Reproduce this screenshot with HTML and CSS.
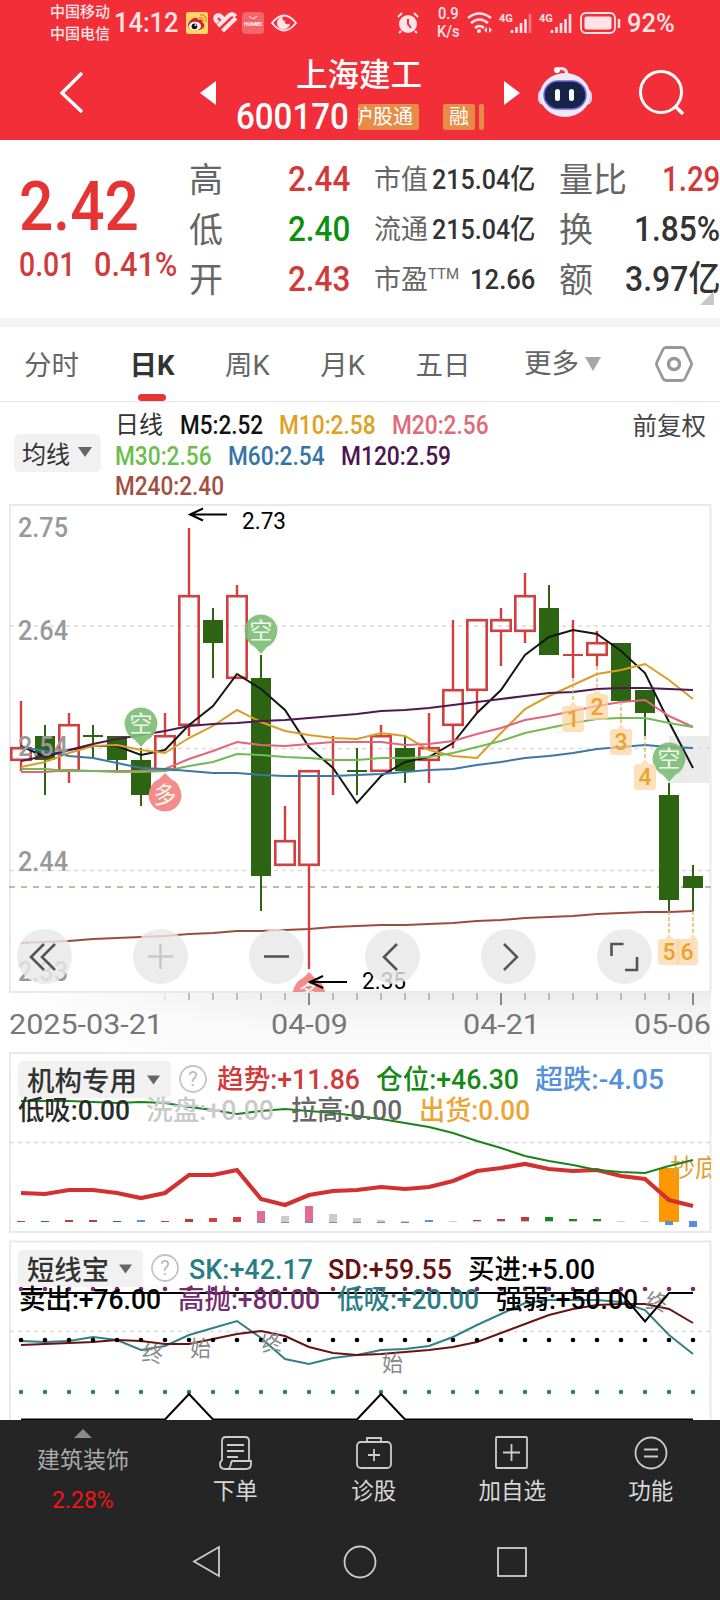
FILE: index.html
```html
<!DOCTYPE html>
<html lang="zh-CN">
<head>
    <meta charset="UTF-8">
    <meta name="viewport" content="width=device-width, initial-scale=1.0">
    <title>上海建工 600170</title>
    <link rel="stylesheet" href="styles.css">
</head>
<body>
    <header class="header">
        <div class="status-bar">
            <div class="carriers"><span>中国移动</span><span>中国电信</span></div>
            <span class="clock" data-w="65">14:12</span>
            <svg class="status-apps" width="112" height="24" viewBox="0 0 112 24">
                <rect x="1" y="1" width="22" height="22" rx="2" fill="#ffd667"/>
                <path d="M3 14c1-5 6-8 9-7 1 .3 1 1 1 2 3-1 5 0 4 2 2 1 3 3 2 5-2 4-15 5-16-2z" fill="#d5232b"/>
                <ellipse cx="10" cy="15" rx="6" ry="4.3" fill="#fff"/>
                <circle cx="9.5" cy="15.3" r="2.9" fill="#111"/><circle cx="10.5" cy="14.3" r="1" fill="#fff"/>
                <path d="M14 7c3-1 5 1 4 4M15 4c5-1 7 3 6 7" fill="none" stroke="#e8912b" stroke-width="1.4"/>
                <g fill="none" stroke="#ffe3e5" stroke-width="4.200"><path d="M38 7.500l-2-2a3 3 0 0 0-5 4l2 2M33 15l11-10.500q4-3 6.500 1M37.500 20l13.500-13"/></g>
                <rect x="57" y="1" width="22" height="22" rx="4" fill="#f4666c"/>
                <path d="M64 5q4 5 8 0" fill="none" stroke="#ffd9da" stroke-width="1.200"/>
                <text x="59" y="15" textLength="18" lengthAdjust="spacingAndGlyphs" class="tiny-logo">HUAWEI</text>
                <path d="M87 12q12-15 24 0q-12 15-24 0z" fill="none" stroke="#ffe3e5" stroke-width="2"/>
                <path d="M98 5.500a6.500 6.500 0 1 0 7 7c-3 2-6 0-5-3-3 0-3-2-2-4z" fill="#ffe3e5"/>
            </svg>
            <div class="status-right">
                <svg width="24" height="24" viewBox="0 0 24 24"><circle cx="12" cy="13" r="9" fill="#ffe3e5"/><path d="M2 6l4-4M22 6l-4-4M5 20l-2 2M19 20l2 2" stroke="#ffe3e5" stroke-width="2"/><path d="M12 8v5l3 4" fill="none" stroke="#f22f38" stroke-width="2"/></svg>
                <div class="net-speed"><span data-w="21">0.9</span><span data-w="23">K/s</span></div>
                <svg width="26" height="24" viewBox="0 0 26 24"><path d="M1 7q11-9 23 0M4 12q8.500-7 17 0M8 17q4.500-4 9 0" fill="none" stroke="#ffe3e5" stroke-width="2.600"/><circle cx="12" cy="20" r="2" fill="#ffe3e5"/><path d="M17 19l3-3v6zM25 19l-3-3v6z" fill="#ffe3e5"/></svg>
                <svg class="signal" width="34" height="24" viewBox="0 0 34 24"><text x="0" y="11" class="tiny-4g">4G</text><path d="M13 22v-3M17.500 22v-6M22 22v-10M26.500 22v-14" stroke="#ffe3e5" stroke-width="2.600"/><path d="M31 22v-19" stroke="#f77a80" stroke-width="2.600"/></svg>
                <svg class="signal" width="34" height="24" viewBox="0 0 34 24"><text x="0" y="11" class="tiny-4g">4G</text><path d="M13 22v-3M17.500 22v-6M22 22v-10M26.500 22v-14M31 22v-19" stroke="#ffe3e5" stroke-width="2.600"/></svg>
                <svg class="battery" width="42" height="24" viewBox="0 0 42 24"><rect x="1" y="2" width="34" height="20" rx="5" fill="none" stroke="#ffe3e5" stroke-width="1.800"/><rect x="4.500" y="5.500" width="27" height="13" rx="2" fill="#ffe3e5"/><path d="M39 8v9" stroke="#ffe3e5" stroke-width="2.500"/></svg>
                <span class="battery-text" data-w="48">92%</span>
            </div>
        </div>
        <div class="title-bar">
            <svg class="back" width="26" height="44" viewBox="0 0 26 44"><path d="M23 2L3 22l20 19" fill="none" stroke="#fff" stroke-width="3.400"/></svg>
            <svg class="prev" width="16" height="24" viewBox="0 0 16 24"><path d="M16 0v24L0 12z" fill="#fff"/></svg>
            <div class="stock">
                <div class="stock-name">上海建工</div>
                <div class="stock-code">
                    <span class="code" data-w="113">600170</span>
                    <span class="tag tag-clip"><i>沪股通</i></span>
                    <span class="tag tag-rong">融</span>
                    <span class="tag tag-stub"></span>
                </div>
            </div>
            <svg class="next" width="16" height="24" viewBox="0 0 16 24"><path d="M0 0v24l16-12z" fill="#fff"/></svg>
            <svg class="robot" width="56" height="52" viewBox="0 0 56 52">
                <path d="M21 3q9-2 9 6" fill="none" stroke="#f3e7f5" stroke-width="3"/><circle cx="20" cy="4" r="3" fill="#fff"/>
                <rect x="1" y="23" width="54" height="16" rx="6" fill="#d6cff5"/>
                <ellipse cx="28" cy="29" rx="25" ry="22" fill="#eceafa"/>
                <rect x="7" y="15" width="42" height="28" rx="14" fill="#182447" stroke="#7663df" stroke-width="1.500"/>
                <rect x="18" y="23" width="5" height="12" rx="2.500" fill="#fff"/><rect x="32" y="23" width="5" height="12" rx="2.500" fill="#fff"/>
            </svg>
            <svg class="search" width="48" height="48" viewBox="0 0 48 48"><circle cx="23" cy="23" r="20.500" fill="none" stroke="#fff" stroke-width="3"/><path d="M37 37l8 8" stroke="#fff" stroke-width="3.500"/></svg>
        </div>
    </header>

    <section class="quote">
        <div class="price">
            <div class="price-now" data-w="120">2.42</div>
            <div class="price-change"><span data-w="56">0.01</span><span data-w="83">0.41%</span></div>
        </div>
        <div class="col col-hl">
            <div class="row"><label>高</label><b class="red" data-w="62">2.44</b></div>
            <div class="row"><label>低</label><b class="green" data-w="62">2.40</b></div>
            <div class="row"><label>开</label><b class="red" data-w="62">2.43</b></div>
        </div>
        <div class="col col-cap">
            <div class="row"><label>市值</label><b data-w="103">215.04亿</b></div>
            <div class="row"><label>流通</label><b data-w="103">215.04亿</b></div>
            <div class="row"><label>市盈<sup>TTM</sup></label><b data-w="65">12.66</b></div>
        </div>
        <div class="col col-vol">
            <div class="row"><label>量比</label><b class="red" data-w="58">1.29</b></div>
            <div class="row"><label>换</label><b data-w="86">1.85%</b></div>
            <div class="row"><label>额</label><b data-w="95">3.97亿</b></div>
        </div>
        <span class="corner"></span>
    </section>

    <nav class="tabs">
        <span>分时</span>
        <span class="active">日K</span>
        <span>周K</span>
        <span>月K</span>
        <span>五日</span>
        <span class="more">更多<i class="caret"></i></span>
        <svg width="38" height="38" viewBox="0 0 38 38"><path d="M11 2.500h16q2 0 3 2l6 12.500q1 2 0 4l-6 12.500q-1 2-3 2H11q-2 0-3-2L2 21q-1-2 0-4L8 4.500q1-2 3-2z" fill="none" stroke="#999" stroke-width="2.800"/><circle cx="19" cy="19" r="5.500" fill="none" stroke="#999" stroke-width="3.500"/></svg>
    </nav>

    <section class="ma">
        <div class="pill">均线<i class="caret small"></i></div>
        <div class="ma-lines">
            <div><span class="ma-name">日线</span><span class="m5" data-w="83">M5:2.52</span><span class="m10" data-w="97">M10:2.58</span><span class="m20" data-w="97">M20:2.56</span></div>
            <div><span class="m30" data-w="97">M30:2.56</span><span class="m60" data-w="97">M60:2.54</span><span class="m120" data-w="110">M120:2.59</span></div>
            <div><span class="m240" data-w="109">M240:2.40</span></div>
        </div>
        <span class="adjust">前复权</span>
    </section>

    <svg id="kline" class="chart" width="720" height="550" viewBox="0 500 720 550"></svg>
    <svg id="trend" class="chart" width="720" height="185" viewBox="0 1050 720 185"></svg>
    <svg id="short" class="chart" width="720" height="185" viewBox="0 1235 720 185"></svg>

    <footer class="footer">
        <div class="actions">
            <div class="sector"><i class="caret up"></i><span>建筑装饰</span><em data-w="62">2.28%</em></div>
            <div class="action">
                <svg width="36" height="38" viewBox="0 0 36 38"><path d="M5 27V7q0-4 4-4h19q4 0 4 4v20M10 11h17M10 17h17M10 23h11M5 27q-2 0-2 3 0 5 5 5h21q5 0 5-5v-3H16q-2 0-2 2.500T11.500 35"/></svg>
                <span>下单</span>
            </div>
            <div class="action">
                <svg width="38" height="38" viewBox="0 0 38 38"><rect x="2" y="8" width="34" height="26" rx="4"/><path d="M12 8V4h14v4M19 15v12M13 21h12"/></svg>
                <span>诊股</span>
            </div>
            <div class="action">
                <svg width="36" height="38" viewBox="0 0 36 38"><rect x="2" y="3" width="31" height="31" rx="1"/><path d="M17.500 10v17M9 18.500h17"/></svg>
                <span>加自选</span>
            </div>
            <div class="action">
                <svg width="36" height="38" viewBox="0 0 36 38"><circle cx="18" cy="19" r="15.500"/><path d="M11 15.500h14M11 22.500h14"/></svg>
                <span>功能</span>
            </div>
        </div>
        <div class="system-nav">
            <svg width="32" height="36" viewBox="0 0 32 36"><path d="M28 3v29L3 17.500z"/></svg>
            <svg width="36" height="36" viewBox="0 0 36 36"><circle cx="18" cy="18" r="15.500"/></svg>
            <svg width="32" height="36" viewBox="0 0 32 36"><rect x="2" y="4" width="28" height="28"/></svg>
        </div>
    </footer>
    <script src="charts.js"></script>
</body>
</html>
```

FILE: styles.css
```css
* {
    padding: 0;
    margin: 0;
    box-sizing: border-box;
}
body {
    width: 720px;
    height: 1600px;
    overflow: hidden;
    background-color: #fff;
    font-family: Roboto, "Noto Sans CJK SC", sans-serif;
    color: #333;
}
svg {
    display: block;
    flex: none;
}
i, em {
    font-style: normal;
}
[data-w] {
    display: inline-block;
    white-space: nowrap;
    flex: none;
}
[data-w] > span {
    display: inline-block;
    transform-origin: left center;
}
.red { color: #d23a3a; }
.green { color: #0f8f0f; }

/* header */
.header {
    height: 140px;
    background-color: #f22f38;
    color: #fff;
}
.status-bar {
    height: 46px;
    padding-left: 50px;
    display: flex;
    align-items: center;
    color: #ffe3e5;
}
.carriers {
    display: flex;
    flex-direction: column;
    width: 64px;
    font-size: 15px;
    line-height: 22px;
    font-weight: 500;
}
.clock {
    font-size: 27px;
    font-weight: 500;
}
.status-apps {
    margin-left: 6px;
}
.tiny-logo {
    font-size: 5px;
    font-weight: 700;
    fill: #fff;
}
.tiny-4g {
    font-size: 11px;
    font-weight: 700;
    fill: #ffe3e5;
}
.status-right {
    margin-left: auto;
    width: 324px;
    display: flex;
    align-items: center;
}
.net-speed {
    width: 36px;
    margin-left: 11px;
    padding-right: 2px;
    display: flex;
    flex-direction: column;
    align-items: center;
    font-size: 16px;
    line-height: 18px;
    font-weight: 500;
}
.signal {
    margin-left: 6px;
}
.battery {
    margin-left: 7px;
}
.battery-text {
    margin-left: 5px;
    font-size: 26px;
    font-weight: 500;
}
.title-bar {
    height: 94px;
    display: flex;
    align-items: center;
}
.back {
    margin-left: 59px;
}
.prev {
    margin-left: 115px;
}
.stock {
    margin-left: 20px;
    width: 248px;
    height: 94px;
    padding-top: 11px;
}
.stock-name {
    padding-left: 60px;
    font-size: 31.500px;
    line-height: 38px;
    font-weight: 500;
}
.stock-code {
    display: flex;
    align-items: center;
    height: 44px;
}
.code {
    font-size: 36px;
    font-weight: 500;
}
.tag {
    height: 26px;
    line-height: 27px;
    font-size: 20px;
    background-color: #e78c46;
    border-radius: 2px;
    overflow: hidden;
    white-space: nowrap;
    text-align: center;
}
.tag-clip {
    width: 61px;
    margin-left: 9px;
    padding-right: 6px;
    display: flex;
    justify-content: flex-end;
}
.tag-rong {
    width: 32px;
    margin-left: 24px;
}
.tag-stub {
    width: 5px;
    margin-left: 4px;
}
.next {
    margin-left: 20px;
}
.robot {
    margin-left: 17px;
    margin-top: -3px;
}
.search {
    margin-left: 45px;
}

/* quote */
.quote {
    position: relative;
    height: 187px;
    border-bottom: 9px solid #f4f4f4;
    display: flex;
}
.price {
    width: 189px;
    padding: 26px 0 0 19px;
    color: #e43434;
}
.price-now {
    font-size: 69px;
    line-height: 82px;
    font-weight: 500;
}
.price-change {
    display: flex;
    gap: 19px;
    margin-top: -2px;
    font-size: 34px;
    line-height: 36px;
    font-weight: 500;
    color: #cf3b3b;
}
.col {
    padding-top: 15px;
}
.row {
    height: 50px;
    display: flex;
    align-items: center;
    justify-content: space-between;
}
.row label {
    color: #666;
    font-size: 34px;
    line-height: 50px;
}
.row b {
    font-size: 35px;
    line-height: 50px;
    font-weight: 500;
}
.col-hl {
    width: 161px;
}
.col-cap {
    width: 161px;
    margin-left: 24px;
}
.col-cap label {
    font-size: 27px;
    white-space: nowrap;
}
.col-cap b {
    font-size: 28px;
}
.col-cap sup {
    font-size: 15px;
    line-height: 0;
    vertical-align: 10px;
}
.col-vol {
    width: 161px;
    margin-left: 24px;
}
.corner {
    position: absolute;
    right: 6px;
    bottom: 13px;
    border-left: 14px solid transparent;
    border-bottom: 14px solid #c8c8c8;
}

/* tabs */
.tabs {
    height: 75px;
    padding: 0 27px 0 24px;
    display: flex;
    align-items: center;
    border-bottom: 1px solid #e6e6e6;
    font-size: 27.500px;
    color: #666;
}
.tabs > span {
    height: 74px;
    line-height: 78px;
    margin-right: 50.500px;
}
.tabs .active {
    position: relative;
    font-weight: 700;
    color: #333;
}
.tabs .active::after {
    content: "";
    position: absolute;
    left: 8px;
    bottom: 0;
    width: 28px;
    height: 7px;
    border-radius: 4px;
    background-color: #e43434;
}
.tabs .more {
    display: flex;
    align-items: center;
    margin: 0 auto 0 3px;
}
.caret {
    display: inline-block;
    margin-left: 6px;
    border: 8.500px solid transparent;
    border-top: 14px solid #a6a6a6;
    border-bottom: 0;
}
.caret.small {
    border-width: 10px 7px 0;
    border-top-color: #666;
}
.caret.up {
    margin: 0;
    border: 9px solid transparent;
    border-top: 0;
    border-bottom-color: #8b8b8b;
}

/* moving averages */
.ma {
    height: 98px;
    padding: 8px 14px 0;
    display: flex;
    align-items: flex-start;
}
.pill {
    width: 87px;
    height: 38px;
    margin: 24px 14px 0 0;
    padding: 0 0 2px 8px;
    display: flex;
    align-items: center;
    border-radius: 6px;
    background-color: #f1f1f1;
    font-size: 24px;
}
.pill .caret {
    margin-left: 8px;
}
.ma-lines {
    flex: 1;
    font-size: 25.500px;
    font-weight: 500;
}
.ma-lines > div {
    height: 30.500px;
    line-height: 31px;
    display: flex;
    gap: 16px;
}
.ma-name {
    font-size: 24px;
    font-weight: 400;
    width: 49px;
}
.m5 { color: #111; }
.m10 { color: #e0a020; }
.m20 { color: #e06a7a; }
.m30 { color: #6cbd4c; }
.m60 { color: #3574a5; }
.m120 { color: #4b164f; }
.m240 { color: #a3503f; }
.adjust {
    font-size: 24.500px;
    line-height: 33px;
    color: #444;
}

/* charts */
.chart text {
    font-weight: 500;
}
.chart .axis {
    font-size: 27px;
    fill: #999;
}
.chart .date {
    font-size: 28px;
    font-weight: 400;
    fill: #777;
}
.chart .extreme {
    font-size: 24px;
    font-weight: 400;
    fill: #000;
}
.chart .legend {
    font-size: 27px;
}
.chart .pick {
    font-size: 27px;
    font-weight: 500;
    fill: #333;
}
.chart .note {
    font-size: 22px;
    font-weight: 400;
    fill: #888;
}
.chart .hint {
    font-size: 25px;
    font-weight: 400;
}
.chart .pin {
    font-size: 23px;
    font-weight: 400;
    fill: #eef8ec;
    text-anchor: middle;
}
.chart .count {
    font-size: 23px;
    fill: #efa12f;
    text-anchor: middle;
}
.chart .help {
    font-size: 20px;
    font-weight: 400;
    fill: #bbb;
    text-anchor: middle;
}

/* footer */
.footer {
    height: 180px;
    background-color: #252525;
    color: #d8d8d8;
}
.actions {
    height: 104px;
    display: flex;
}
.sector {
    width: 166px;
    padding-top: 9px;
    display: flex;
    flex-direction: column;
    align-items: center;
    font-size: 23px;
    line-height: 40px;
    color: #aaa;
}
.sector span {
    margin-top: 3px;
}
.sector em {
    color: #f01616;
}
.sector em span {
    margin-top: 0;
}
.action {
    flex: 1;
    padding-top: 14px;
    display: flex;
    flex-direction: column;
    align-items: center;
    font-size: 22.500px;
    line-height: 38px;
}
.action svg, .system-nav svg {
    fill: none;
    stroke: #ccc;
    stroke-width: 1.800;
}
.system-nav {
    height: 76px;
    padding: 0 192px 0 191px;
    display: flex;
    justify-content: space-between;
    align-items: center;
}
```

FILE: charts.js
```js
document.querySelectorAll('[data-w]').forEach(el => {
    const w = Number(el.dataset.w);
    const inner = document.createElement('span');
    inner.textContent = el.textContent;
    el.textContent = '';
    el.appendChild(inner);
    const scale = w / inner.offsetWidth;
    el.style.width = `${w}px`;
    inner.style.transform = `scaleX(${scale})`;
});

const RED = '#d23f3f';
const GREEN = '#2d6412';
const xAt = i => 21 + i * 24;

const line = (x1, y1, x2, y2, color, w = 1, extra = '') =>
    `<path d="M${x1} ${y1}L${x2} ${y2}" stroke="${color}" stroke-width="${w}" ${extra}/>`;
const rect = (x, y, w, h, fill, extra = '') =>
    `<rect x="${x}" y="${y}" width="${w}" height="${h}" fill="${fill}" ${extra}/>`;
const series = (ys, color, w = 2) =>
    `<polyline points="${ys.map((y, i) => `${xAt(i)},${y}`).join(' ')}" fill="none" stroke="${color}" stroke-width="${w}"/>`;
const text = (str, x, y, w, cls, fill) =>
    `<text x="${x}" y="${y}" class="${cls}" ${w ? `textLength="${w}" lengthAdjust="spacingAndGlyphs"` : ''} ${fill ? `fill="${fill}"` : ''}>${str}</text>`;
const frame = (y, h) => rect(10, y, 700.5, h, 'none', 'stroke="#eaeaea" stroke-width="2"');
const dash = y => line(10, y, 710, y, '#dcdcdc', 1.3, 'stroke-dasharray="4 4"');

// ---- candles: [up, high, top, bottom, low] ----
const candles = [
    [1, 701, 747, 761, 771], [0, 725, 736, 760, 795], [1, 713, 724, 772, 783],
    [0, 725, 735, 737, 758], [0, 736, 736, 760, 771], [0, 748, 760, 795, 806],
    [1, 713, 735, 771, 771], [1, 528, 595, 726, 736], [0, 608, 620, 643, 678],
    [1, 585, 595, 679, 679], [0, 655, 678, 876, 911], [1, 806, 840, 866, 866],
    [1, 770, 770, 866, 969], [1, 736, 759, 761, 795], [0, 748, 770, 772, 795],
    [1, 725, 735, 772, 772], [0, 736, 748, 771, 783], [1, 713, 747, 761, 783],
    [1, 620, 689, 726, 748], [1, 619, 619, 691, 713], [1, 608, 619, 632, 666],
    [1, 573, 595, 632, 643], [0, 585, 608, 655, 655], [1, 620, 654, 656, 678],
    [1, 631, 642, 656, 666], [0, 643, 643, 701, 701], [0, 690, 690, 713, 736],
    [0, 783, 795, 900, 911], [0, 865, 876, 888, 911]
];
const ma5 = [746, 757, 750, 746, 746, 755, 750, 725, 706, 674, 689, 710, 747, 768, 803, 776, 762, 757, 743, 713, 690, 655, 637, 630, 634, 651, 673, 722, 768];
const ma10 = [767, 762, 753, 746, 745, 750, 753, 738, 726, 710, 722, 731, 735, 738, 739, 733, 736, 750, 756, 758, 733, 709, 696, 685, 674, 670, 664, 680, 699];
const ma20 = [772, 772, 770, 771, 771, 771, 769, 759, 751, 742, 745, 746, 744, 742, 742, 742, 745, 744, 741, 734, 728, 720, 716, 711, 706, 702, 700, 716, 727];
const ma30 = [769, 769, 771, 771, 772, 772, 771, 766, 762, 754, 755, 757, 758, 760, 760, 758, 758, 757, 753, 747, 741, 733, 728, 723, 719, 718, 718, 723, 727];
const ma60 = [747, 751, 756, 758, 763, 768, 769, 771, 773, 773, 775, 776, 776, 776, 775, 774, 772, 770, 769, 765, 762, 758, 756, 753, 749, 747, 745, 747, 748];
const ma120 = [761, 756, 750, 744, 739, 735, 731, 726, 724, 723, 721, 720, 718, 716, 714, 711, 710, 708, 705, 702, 699, 696, 693, 692, 689, 688, 688, 689, 690];
const ma240 = [943, 942, 941, 939, 938, 937, 936, 934, 933, 931, 931, 930, 929, 927, 926, 925, 925, 924, 923, 921, 920, 918, 917, 916, 914, 913, 912, 912, 911];

function candle([up, high, top, bottom, low], i) {
    const x = xAt(i);
    const color = up ? RED : GREEN;
    const wick = up ? 2.4 : 2;
    if (bottom - top <= 2) {
        return line(x, high, x, low, color, wick) + rect(x - 10, top, 20, 2, color);
    }
    if (!up) {
        return line(x, high, x, low, color, wick) + rect(x - 10, top, 20, bottom - top, color);
    }
    return line(x, high, x, top, color, wick) + line(x, bottom, x, low, color, wick) +
        rect(x - 9.7, top + 1.2, 19.4, bottom - top - 2.4, 'none', `stroke="${color}" stroke-width="2.6"`);
}

function sellPin(x, y) {
    return `<path d="M${x - 16.5} ${y}A16.5 16.5 0 1 1 ${x + 16.5} ${y}Q${x + 15} ${y + 12} ${x + 6} ${y + 16}L${x} ${y + 23}L${x - 6} ${y + 16}Q${x - 15} ${y + 12} ${x - 16.5} ${y}z" fill="#7cbc74" fill-opacity=".9"/>` +
        text('空', x, y + 8, 0, 'pin');
}
function buyPin(x, y) {
    return `<path d="M${x - 16.5} ${y}A16.5 16.5 0 1 0 ${x + 16.5} ${y}Q${x + 15} ${y - 12} ${x + 6} ${y - 16}L${x} ${y - 22}L${x - 6} ${y - 16}Q${x - 15} ${y - 12} ${x - 16.5} ${y}z" fill="#f48c8c"/>` +
        text('多', x, y + 8, 0, 'pin');
}
function countTag(n, x, y, from, shift = 0) {
    return line(x, from, x, y - 5, '#d8aa4f', 1.2, 'stroke-dasharray="4 2"') +
        `<path d="M${x - 4} ${y}L${x} ${y - 5}L${x + 4} ${y}z" fill="#fcd49f" fill-opacity=".7"/>` +
        rect(x - 11 + shift, y, 22, 26, '#fcd49f', 'rx="3" fill-opacity=".7"') + text(n, x + shift, y + 21, 0, 'count');
}
function arrow(x, y) {
    return `<path d="M${x + 37} ${y}H${x}M${x + 13} ${y - 6}L${x} ${y}l13 6" fill="none" stroke="#000" stroke-width="2"/>`;
}

function drawKline() {
    let s = '<defs><linearGradient id="fade" x2="0" y2="1"><stop stop-color="#ededed"/><stop offset=".6" stop-color="#f8f8f8"/><stop offset="1" stop-color="#fafafa"/></linearGradient>' +
        '<linearGradient id="left"><stop stop-color="#fff"/><stop offset="1" stop-color="#fff" stop-opacity="0"/></linearGradient>' +
        '<clipPath id="plot"><rect x="10" y="505" width="701" height="487"/></clipPath></defs>';
    s += rect(10, 993, 701, 57, 'url(#fade)') + rect(10, 993, 300, 57, 'url(#left)');
    s += frame(505, 487);
    s += rect(669, 736, 42, 47, '#ebebeb');
    s += [626, 748.5, 870.5].map(dash).join('');
    s += line(9, 887, 711, 887, '#b99f77', 1.6, 'stroke-dasharray="6 6"');
    s += candles.map(candle).join('');
    s += series(ma5, '#161616') + series(ma10, '#dc9d27') + series(ma20, '#e2657a') + series(ma30, '#72b957');
    s += series(ma60, '#3b78a8') + series(ma120, '#50194f') + series(ma240, '#9e4b3d');
    [['2.75', 537], ['2.64', 640], ['2.54', 756], ['2.44', 871], ['2.33', 981]].forEach(([t, y]) => {
        s += text(t, 18, y, 50, 'axis');
    });
    s += sellPin(141, 724) + sellPin(261, 631) + sellPin(669, 759) + buyPin(165, 795);
    s += `<g clip-path="url(#plot)">${buyPin(309, 994)}</g>`;
    s += countTag(1, 573, 706, 678) + countTag(2, 597, 694, 666) + countTag(3, 621, 729, 701);
    s += countTag(4, 645, 764, 736) + countTag(5, 669, 939, 911) + countTag(6, 693, 939, 911, -6);
    s += arrow(190, 514.5) + text('2.73', 242, 529, 44, 'extreme');
    s += arrow(310, 982) + text('2.35', 362, 989, 44, 'extreme');

    // zoom / scroll buttons
    const icons = [
        'M44 944L31 957l13 13M55 944L42 957l13 13', 'M148 956.500h25M160.500 944v25', 'M264 956.500h25',
        'M397 944L384 957l13 13', 'M504 944l13 13-13 13', 'M611.500 956v-12h12M637 957v13h-12'
    ];
    icons.forEach((d, i) => {
        s += `<circle cx="${44.5 + i * 116}" cy="956.5" r="27.5" fill="#e8e8e8" fill-opacity=".82"/>`;
        s += `<path d="${d}" fill="none" stroke="${i === 1 ? '#c9c9c9' : '#555'}" stroke-width="2.6"/>`;
    });

    for (let i = 6; i <= 28; i++) {
        const major = i === 12 || i === 20 || i === 28;
        s += line(xAt(i), 993, xAt(i), major ? 1005 : 1000, i === 6 ? '#d5d5d5' : '#888', major ? 2 : 1);
    }
    s += text('2025-03-21', 9, 1034, 154, 'date', '#666') + text('04-09', 271, 1034, 77, 'date');
    s += text('04-21', 463, 1034, 77, 'date') + text('05-06', 634, 1034, 77, 'date');
    document.getElementById('kline').innerHTML = s;
}

function picker(name, y, w, textW, helpX) {
    return rect(18, y, w, 37, '#f1f1f1', 'rx="5"') + text(name, 27, y + 30, textW, 'pick') +
        `<path d="M${w - 6} ${y + 14.5}h13l-6.500 9z" fill="#666"/>` +
        `<circle cx="${helpX}" cy="${y + 18}" r="13" fill="none" stroke="#c4c4c4" stroke-width="1.8"/>` +
        text('?', helpX, y + 25, 0, 'help');
}

// ---- first indicator ----
const position = [1101, 1101, 1101, 1102, 1103, 1102, 1103, 1107, 1110, 1114, 1111, 1109, 1111, 1113, 1116, 1119, 1123, 1127, 1133, 1141, 1148, 1156, 1161, 1165, 1170, 1172, 1173, 1166, 1160];
const trend = [1193, 1194, 1190, 1190, 1193, 1198, 1193, 1175, 1175, 1170, 1199, 1205, 1195, 1191, 1190, 1187, 1189, 1187, 1181, 1171, 1168, 1164, 1169, 1171, 1170, 1176, 1179, 1200, 1206];
const R = '#b83e3e', G = '#168a16', B = '#5590d8', P = '#e36b90', C = '#ccc';
const bars = [[R, 1], [G, 1], [R, 2], [R, 2], [G, 1], [B, 2], [R, 1], [R, 3], [RED, 4], [RED, 5], [P, 11], [C, 6], [P, 16], [C, 8], [C, 4], [C, 2], [C, 1], [B, 2], [C, 1], [R, 2], [R, 3], [R, 5], [G, 5], [G, 3], [G, 3], [C, 1], [C, 1]];

function drawTrend() {
    let s = frame(1053, 179) + dash(1142.5);
    bars.forEach(([color, h], i) => {
        s += rect(xAt(i) - 4, 1222 - h, 8, h, color);
        if (i > 9 && i < 17) s += rect(xAt(i) - 4, 1222, 8, 1, '#5590c0');
        if (i > 18 && i < 25) s += rect(xAt(i) - 4, 1221, 8, 1, C);
    });
    s += '<clipPath id="edge"><rect x="10" y="1050" width="701" height="190"/></clipPath>';
    s += rect(659, 1168, 20, 54, '#ff9800') + rect(665, 1221, 8, 4, B) + rect(689, 1221, 8, 6, B);
    s += `<g clip-path="url(#edge)">${text('抄底', 670, 1177, 50, 'hint', '#e2a037')}</g>`;
    s += series(trend, '#d33030', 4.2) + series(position, '#1a841a', 2);
    s += picker('机构专用', 1061, 153, 110, 193);
    [
        ['趋势:+11.86', 217, 1089, 143, '#d23a3a'], ['仓位:+46.30', 376, 1089, 143, '#168a16'], ['超跌:-4.05', 535, 1089, 129, '#5590d8'],
        ['低吸:0.00', 18, 1120, 112, '#2b2b2b'], ['洗盘:+0.00', 146, 1120, 128, '#cacaca'],
        ['拉高:0.00', 291, 1120, 111, '#666'], ['出货:0.00', 419, 1120, 111, '#eea433']
    ].forEach(([t, x, y, w, c]) => { s += text(t, x, y, w, 'legend', c); });
    document.getElementById('trend').innerHTML = s;
}

// ---- second indicator ----
const sk = [1341, 1342, 1341, 1337, 1340, 1350, 1346, 1335, 1328, 1321, 1338, 1359, 1364, 1358, 1355, 1350, 1349, 1346, 1337, 1325, 1314, 1303, 1300, 1300, 1300, 1302, 1310, 1335, 1354];
const sd = [1345, 1344, 1343, 1342, 1340, 1341, 1344, 1344, 1339, 1334, 1331, 1336, 1347, 1353, 1355, 1354, 1352, 1350, 1347, 1342, 1333, 1324, 1315, 1309, 1305, 1304, 1304, 1309, 1323];

function drawShort() {
    let s = frame(1241.5, 200) + dash(1331.5);
    s += series(sk, '#31808a', 2) + series(sd, '#681414', 2);
    for (let i = 0; i < 29; i++) {
        s += `<circle cx="${xAt(i)}" cy="1340" r="2.3" fill="#000"/><circle cx="${xAt(i)}" cy="1392" r="2.3" fill="#2a7d85"/>`;
    }
    s += '<path d="M21 1419.500H165L189 1394L213 1419.500H357L381 1394L405 1419.500H693" fill="none" stroke="#000" stroke-width="2"/>';
    [['终', 142, 1362, 6], ['始', 190, 1356, 0], ['终', 261, 1351, -8], ['始', 382, 1371, 0], ['终', 646, 1310, 8]].forEach(([t, x, y, r]) => {
        s += `<g transform="rotate(${r} ${x + 11} ${y - 8})">${text(t, x, y, 21, 'note')}</g>`;
    });
    s += picker('短线宝', 1250, 125, 82, 165);
    for (let i = 0; i < 29; i++) {
        s += `<circle cx="${xAt(i)}" cy="1289" r="2.3" fill="#752d70"/>`;
    }
    s += '<path d="M21 1293H621L645 1321.500L669 1293H693" fill="none" stroke="#000" stroke-width="2"/>';
    [
        ['SK:+42.17', 189, 1279, 124, '#2a7d85'], ['SD:+59.55', 328, 1279, 124, '#681111'], ['买进:+5.00', 468, 1279, 127, '#000'],
        ['卖出:+76.00', 19, 1309, 142, '#000'], ['高抛:+80.00', 178, 1309, 142, '#752d70'],
        ['低吸:+20.00', 337, 1309, 142, '#2a7d85'], ['强弱:+50.00', 496, 1309, 142, '#000']
    ].forEach(([t, x, y, w, c]) => { s += text(t, x, y, w, 'legend', c); });
    document.getElementById('short').innerHTML = s;
}

drawKline();
drawTrend();
drawShort();
```
